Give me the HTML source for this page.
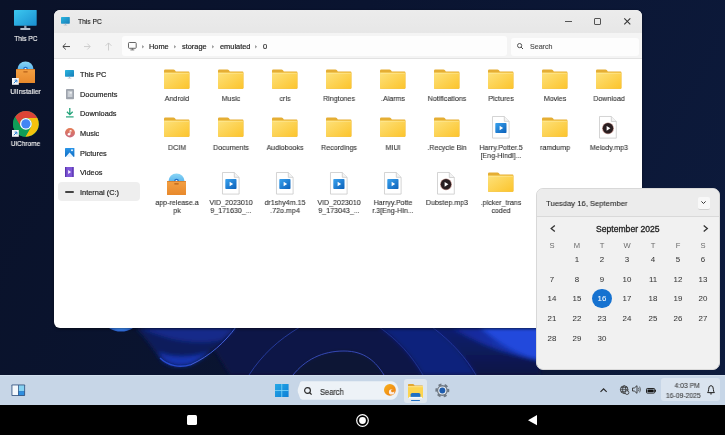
<!DOCTYPE html><html><head><meta charset="utf-8"><style>
*{margin:0;padding:0;box-sizing:border-box}
html,body{width:725px;height:435px;overflow:hidden;background:#0b1430;font-family:"Liberation Sans",sans-serif}
.a{position:absolute}
.t{position:absolute;white-space:nowrap;line-height:10px;height:10px;-webkit-text-stroke-width:0.18px;will-change:transform}
svg{position:absolute;overflow:visible}
</style></head><body>

<svg style="left:0;top:0" width="725" height="375" viewBox="0 0 725 375">
<defs>
<linearGradient id="wg" gradientUnits="userSpaceOnUse" x1="0" y1="0" x2="725" y2="375">
<stop offset="0" stop-color="#0a1229"/><stop offset="0.4" stop-color="#0a1430"/><stop offset="1" stop-color="#0d1b3d"/>
</linearGradient>
<filter id="bl" x="-10%" y="-10%" width="120%" height="120%"><feGaussianBlur stdDeviation="2.2"/></filter>
<filter id="bl1" x="-10%" y="-10%" width="120%" height="120%"><feGaussianBlur stdDeviation="0.6"/></filter>
<radialGradient id="blob" cx="0.5" cy="0.5" r="0.5"><stop offset="0" stop-color="#5aa8ff"/><stop offset="0.8" stop-color="#3a86f0"/><stop offset="1" stop-color="#2a60d0"/></radialGradient>
<linearGradient id="lens" x1="0" y1="0" x2="0" y2="1"><stop offset="0" stop-color="#0e206a"/><stop offset="0.45" stop-color="#0c1a54"/><stop offset="0.8" stop-color="#112680"/><stop offset="1" stop-color="#1a36b0"/></linearGradient>
<linearGradient id="rb" x1="0" y1="0" x2="1" y2="0"><stop offset="0" stop-color="#102288"/><stop offset="1" stop-color="#1a3ac0"/></linearGradient>
<linearGradient id="rb2" x1="0" y1="0" x2="0" y2="1"><stop offset="0" stop-color="#0f2070"/><stop offset="1" stop-color="#0b1545"/></linearGradient>
</defs>
<rect width="725" height="375" fill="url(#wg)"/>
<g filter="url(#bl)">
<path d="M200 327 L540 327 L540 375 L230 375 Z" fill="#0b1646"/>
<path d="M262 327 L379 327 C390 337 395 342 400 345 L400 375 L249 375 C258 355 275 338 300 327 Z" fill="#0b1646"/>
<path d="M293 375 C305 360 322 351 344 351 C365 351 376 362 384 375 Z" fill="#0a1236"/>
<path d="M379 327 L432 327 C452 342 466 358 476 375 L423 375 C412 356 398 340 379 327 Z" fill="#0f207c"/>
<path d="M432 327 L540 327 L540 375 L476 375 C466 358 452 342 432 327 Z" fill="url(#rb2)"/>
<path d="M432 327 L540 327 L540 360 C510 355 480 345 450 327 Z" fill="url(#rb)"/>
<path d="M480 327 C497 342 515 354 540 360 L540 327 Z" fill="#2249dc"/>
<path d="M135 327 L236 327 C220 342 205 358 191 364.6 C183 367.5 170 368 163 363 C155 352 146 338 135 327 Z" fill="#0d1b5c"/><path d="M158 352 C165 364 178 368 191 364.6 C200 360 205 356 210 352 C190 358 172 358 158 352 Z" fill="#1634b0"/>
<path d="M140 327 L236 327 L222 340 C195 346 165 340 140 327 Z" fill="#152d92" opacity="0.85"/>
</g>
<ellipse cx="121" cy="321" rx="16" ry="10.5" fill="url(#blob)" filter="url(#bl1)"/>
<g filter="url(#bl1)">
<path d="M160 358 C168 366 180 368 191 364.6" stroke="#2d55e8" stroke-width="1.4" fill="none" opacity="0.8"/>
<path d="M191 364.6 C210 356 225 342 236 327" stroke="#4a68e8" stroke-width="0.9" fill="none"/>
<path d="M249 375 C262 355 278 340 300 327" stroke="#2c44b0" stroke-width="0.8" fill="none"/>
<path d="M293 375 C305 360 322 351 344 351 C365 351 376 362 384 375" stroke="#3a4ec0" stroke-width="0.9" fill="none"/>
<path d="M379 327 C398 340 412 356 423 375" stroke="#2f48b8" stroke-width="0.7" fill="none" opacity="0.7"/>
<path d="M432 327 C452 342 466 358 476 375" stroke="#3550c8" stroke-width="0.7" fill="none" opacity="0.7"/>
</g>
</svg>
<svg style="left:13.8px;top:9.7px" width="22.7" height="20.1" viewBox="0 0 22.7 20.1"><defs><linearGradient id="mon139" x1="0" y1="0" x2="1" y2="1"><stop offset="0" stop-color="#3cc8f0"/><stop offset="1" stop-color="#1a8fd0"/></linearGradient></defs>
<rect x="0" y="0" width="22.7" height="15.678" rx="0.6" fill="url(#mon139)"/>
<rect x="10.215" y="15.678" width="2.27" height="2.8140000000000005" fill="#9aa6b8"/>
<rect x="6.356000000000001" y="18.090000000000003" width="9.988" height="2.0100000000000002" rx="0.4" fill="#b8c0cc"/></svg>
<div class="t" style="left:0.14999999999999858px;width:51.5px;text-align:center;top:34.4px;font-size:7.8px;color:#f0f0f0;transform:scaleX(0.84);transform-origin:50% 50%;">This PC</div>
<svg style="left:16px;top:60.6px" width="19.0" height="22.0" viewBox="0 0 19 22"><defs><linearGradient id="dsc" x1="0" y1="0" x2="0" y2="1"><stop offset="0" stop-color="#8ad6f6"/><stop offset="1" stop-color="#2e95e2"/></linearGradient>
<linearGradient id="bx" x1="0" y1="0" x2="0" y2="1"><stop offset="0" stop-color="#f3a043"/><stop offset="1" stop-color="#e8892c"/></linearGradient></defs>
<circle cx="9.5" cy="8.6" r="8.1" fill="url(#dsc)"/>
<circle cx="9.5" cy="8.2" r="2.4" fill="#1f6fc8"/>
<circle cx="9.5" cy="8.2" r="1.1" fill="#eef8ff"/>
<rect x="0" y="8.2" width="19" height="13.8" rx="0.6" fill="url(#bx)"/>
<rect x="0" y="8.2" width="19" height="0.8" fill="#d97a22"/>
<rect x="7.2" y="10.2" width="4.6" height="1.2" rx="0.6" fill="#b8621a"/></svg>
<svg style="left:12.2px;top:77.8px" width="6.8" height="6.8" viewBox="0 0 6.8 6.8"><rect x="0" y="0" width="6.8" height="6.8" fill="#f4f6f8"/>
<path d="M1.8 5.2 L4.8 2.2 M2.6 2.1 H4.9 V4.4" stroke="#2a7fd4" stroke-width="1" fill="none"/></svg>
<div class="t" style="left:0.0px;width:51px;text-align:center;top:87.0px;font-size:7.8px;color:#f0f0f0;transform:scaleX(0.88);transform-origin:50% 50%;">UiInstaller</div>
<svg style="left:12.799999999999999px;top:111.19999999999999px" width="25.8" height="25.8" viewBox="0 0 25.8 25.8"><circle cx="12.9" cy="12.9" r="12.9" fill="#0f9d58"/>
<path d="M12.90 6.97 L24.35 6.97 A12.9 12.9 0 0 0 2.03 5.95 L7.76 15.87 A5.93 5.93 0 0 1 12.90 6.97 Z" fill="#db4437" transform="rotate(0 12.9 12.9)"/>
<path d="M12.90 6.97 L24.35 6.97 A12.9 12.9 0 0 0 2.03 5.95 L7.76 15.87 A5.93 5.93 0 0 1 12.90 6.97 Z" fill="#f4c20d" transform="rotate(120 12.9 12.9)"/>
<path d="M12.90 6.97 L24.35 6.97 A12.9 12.9 0 0 0 2.03 5.95 L7.76 15.87 A5.93 5.93 0 0 1 12.90 6.97 Z" fill="#0f9d58" transform="rotate(240 12.9 12.9)"/>
<circle cx="12.9" cy="12.9" r="5.93" fill="#fff"/>
<circle cx="12.9" cy="12.9" r="4.64" fill="#4285f4"/></svg>
<svg style="left:12.2px;top:130.2px" width="6.8" height="6.8" viewBox="0 0 6.8 6.8"><rect x="0" y="0" width="6.8" height="6.8" fill="#f4f6f8"/>
<path d="M1.8 5.2 L4.8 2.2 M2.6 2.1 H4.9 V4.4" stroke="#2a7fd4" stroke-width="1" fill="none"/></svg>
<div class="t" style="left:0.0px;width:51px;text-align:center;top:139.4px;font-size:7.8px;color:#f0f0f0;transform:scaleX(0.84);transform-origin:50% 50%;">UiChrome</div>
<div class="a" style="left:54px;top:10px;width:588px;height:317.5px;border-radius:6px;overflow:hidden;background:#fff;box-shadow:0 1px 3px rgba(0,0,0,0.45)">
<div class="a" style="left:0;top:0;width:588px;height:22.6px;background:linear-gradient(#ececec,#e7e7e7)"></div>
<div class="a" style="left:0;top:22.6px;width:588px;height:26.6px;background:#f4f4f4;border-bottom:0.8px solid #e2e2e2"></div>
<div class="a" style="left:68px;top:26px;width:385px;height:19.5px;background:#fdfdfd;border-radius:3px"></div>
<div class="a" style="left:457px;top:27.5px;width:128px;height:18px;background:#fdfdfd;border-radius:3px"></div>
</div>
<svg style="left:61.1px;top:17.1px" width="8.8" height="8.5" viewBox="0 0 8.8 8.5"><defs><linearGradient id="mon6117" x1="0" y1="0" x2="1" y2="1"><stop offset="0" stop-color="#2ab6e0"/><stop offset="1" stop-color="#167db8"/></linearGradient></defs>
<rect x="0" y="0" width="8.8" height="6.63" rx="0.6" fill="url(#mon6117)"/>
<rect x="3.9600000000000004" y="6.63" width="0.8800000000000001" height="1.1900000000000002" fill="#9aa6b8"/>
<rect x="2.4640000000000004" y="7.65" width="3.8720000000000003" height="0.8500000000000001" rx="0.4" fill="#b8c0cc"/></svg>
<div class="t" style="left:78.2px;top:16.5px;font-size:7.6px;color:#222;transform:scaleX(0.88);transform-origin:0 50%;">This PC</div>
<div class="a" style="left:565px;top:21.3px;width:6.6px;height:0.75px;background:#555"></div>
<div class="a" style="left:594px;top:18px;width:7px;height:7px;border:0.75px solid #555;border-radius:1px"></div>
<svg style="left:624.4px;top:18.4px" width="6.6" height="6.6" viewBox="0 0 6.6 6.6"><path d="M0.3 0.3 L6.3 6.3 M6.3 0.3 L0.3 6.3" stroke="#333" stroke-width="1.05"/></svg>
<svg style="left:61.8px;top:42.8px" width="8.1" height="7.1" viewBox="0 0 8.1 7.1"><path d="M8 3.55 H1 M3.8 0.6 L0.8 3.55 L3.8 6.5" stroke="#444" stroke-width="1" fill="none"/></svg>
<svg style="left:84.2px;top:42.8px" width="7" height="7.1" viewBox="0 0 7 7.1"><path d="M0 3.55 H6 M3.3 0.6 L6.2 3.55 L3.3 6.5" stroke="#c8c8c8" stroke-width="0.9" fill="none"/></svg>
<svg style="left:105px;top:42.3px" width="7" height="8.5" viewBox="0 0 7 8.5"><path d="M3.5 8.5 V1 M0.6 3.8 L3.5 0.9 L6.4 3.8" stroke="#c8c8c8" stroke-width="0.9" fill="none"/></svg>
<svg style="left:127.6px;top:42px" width="8.7" height="8.3" viewBox="0 0 8.7 8.3"><rect x="0.5" y="0.5" width="7.7" height="5.8" rx="0.8" stroke="#555" stroke-width="0.9" fill="none"/><path d="M4.35 6.3 V7.8 M2.4 7.9 H6.3" stroke="#555" stroke-width="0.8"/></svg>
<svg style="left:141.9px;top:45.1px" width="2.2" height="3.6" viewBox="0 0 2.2 3.6"><path d="M0.2 0 L2 1.8 L0.2 3.6 Z" fill="#8a8a8a"/></svg>
<div class="t" style="left:149.4px;top:41.5px;font-size:7.4px;color:#222;transform-origin:0 50%;">Home</div>
<svg style="left:174.1px;top:45.1px" width="2.2" height="3.6" viewBox="0 0 2.2 3.6"><path d="M0.2 0 L2 1.8 L0.2 3.6 Z" fill="#8a8a8a"/></svg>
<div class="t" style="left:182px;top:41.5px;font-size:7.4px;color:#222;transform-origin:0 50%;">storage</div>
<svg style="left:211.6px;top:45.1px" width="2.2" height="3.6" viewBox="0 0 2.2 3.6"><path d="M0.2 0 L2 1.8 L0.2 3.6 Z" fill="#8a8a8a"/></svg>
<div class="t" style="left:219.5px;top:41.5px;font-size:7.4px;color:#222;transform-origin:0 50%;">emulated</div>
<svg style="left:254.9px;top:45.1px" width="2.2" height="3.6" viewBox="0 0 2.2 3.6"><path d="M0.2 0 L2 1.8 L0.2 3.6 Z" fill="#8a8a8a"/></svg>
<div class="t" style="left:262.9px;top:41.5px;font-size:7.4px;color:#222;transform-origin:0 50%;">0</div>
<svg style="left:517px;top:42.8px" width="6.5" height="6.5" viewBox="0 0 6.5 6.5"><circle cx="2.6" cy="2.6" r="2.1" stroke="#444" stroke-width="0.9" fill="none"/><path d="M4.1 4.1 L6 6" stroke="#444" stroke-width="1"/></svg>
<div class="t" style="left:530px;top:41.9px;font-size:7.1px;color:#555;transform-origin:0 50%;">Search</div>
<div class="a" style="left:57.7px;top:182px;width:82.3px;height:19px;background:#eeeeee;border-radius:4px"></div>
<div class="t" style="left:79.5px;top:70.19999999999999px;font-size:7.4px;color:#222;transform-origin:0 50%;">This PC</div>
<div class="t" style="left:79.5px;top:90.0px;font-size:7.4px;color:#222;transform-origin:0 50%;">Documents</div>
<div class="t" style="left:79.5px;top:109.39999999999999px;font-size:7.4px;color:#222;transform-origin:0 50%;">Downloads</div>
<div class="t" style="left:79.5px;top:129.1px;font-size:7.4px;color:#222;transform-origin:0 50%;">Music</div>
<div class="t" style="left:79.5px;top:148.6px;font-size:7.4px;color:#222;transform-origin:0 50%;">Pictures</div>
<div class="t" style="left:79.5px;top:168.0px;font-size:7.4px;color:#222;transform-origin:0 50%;">Videos</div>
<div class="t" style="left:79.5px;top:188.1px;font-size:7.4px;color:#222;transform-origin:0 50%;">Internal (C:)</div>
<svg style="left:65px;top:70.2px" width="9" height="8.5" viewBox="0 0 9 8.5"><defs><linearGradient id="mon6570" x1="0" y1="0" x2="1" y2="1"><stop offset="0" stop-color="#2ab6e0"/><stop offset="1" stop-color="#167db8"/></linearGradient></defs>
<rect x="0" y="0" width="9" height="6.63" rx="0.6" fill="url(#mon6570)"/>
<rect x="4.05" y="6.63" width="0.9" height="1.1900000000000002" fill="#9aa6b8"/>
<rect x="2.5200000000000005" y="7.65" width="3.96" height="0.8500000000000001" rx="0.4" fill="#b8c0cc"/></svg>
<svg style="left:65.7px;top:88.8px" width="8" height="10.2" viewBox="0 0 8 10.2"><rect x="0" y="0" width="8" height="10.2" rx="0.8" fill="#9ea4ad"/><rect x="1.6" y="1.8" width="4.8" height="6.2" fill="#c9ced4"/><rect x="3.6" y="3" width="2.2" height="1.6" fill="#eef0f2"/></svg>
<svg style="left:65.7px;top:108px" width="7.6" height="9.5" viewBox="0 0 7.6 9.5"><path d="M3.8 0 V6.5 M0.9 3.8 L3.8 6.7 L6.7 3.8" stroke="#23a37a" stroke-width="1.3" fill="none"/><rect x="0" y="8.3" width="7.6" height="1.2" fill="#23a37a"/></svg>
<svg style="left:64.6px;top:128.3px" width="10" height="9.5" viewBox="0 0 10 9.5"><defs><linearGradient id="mus" x1="0" y1="0" x2="0" y2="1"><stop offset="0" stop-color="#e57d55"/><stop offset="1" stop-color="#c9687e"/></linearGradient></defs><ellipse cx="5" cy="4.75" rx="5" ry="4.75" fill="url(#mus)"/><circle cx="4" cy="6.2" r="1.3" fill="#fff"/><path d="M5.1 6.2 V2.3 L6.9 3.1" stroke="#fff" stroke-width="0.9" fill="none"/></svg>
<svg style="left:64.8px;top:148.3px" width="9.4" height="8.9" viewBox="0 0 9.4 8.9"><defs><linearGradient id="pic" x1="0" y1="0" x2="0" y2="1"><stop offset="0" stop-color="#2a95e8"/><stop offset="1" stop-color="#0f6ec4"/></linearGradient></defs><rect x="0" y="0" width="9.4" height="8.9" rx="0.6" fill="url(#pic)"/><path d="M0.6 8.9 L4.6 4.6 L8.8 8.9 Z" fill="#eaf5ff"/><circle cx="7" cy="2.3" r="1" fill="#eaf5ff"/></svg>
<svg style="left:65.2px;top:167px" width="8.6" height="10" viewBox="0 0 8.6 10"><rect x="0" y="0" width="8.6" height="10" rx="0.5" fill="#7d55d6"/><rect x="0" y="0" width="1.3" height="10" fill="#5a36ae"/><rect x="7.3" y="0" width="1.3" height="10" fill="#5a36ae"/><path d="M3.1 3 L6.1 5 L3.1 7 Z" fill="#f4eeff"/></svg>
<div class="a" style="left:65px;top:190.8px;width:9.3px;height:2.6px;background:#444;border-radius:1px"></div>
<svg style="left:164.20000000000002px;top:68.9px" width="25.4" height="19.7" viewBox="0 0 25.4 19.7"><defs><linearGradient id="fd164_68" x1="0" y1="0" x2="1" y2="1"><stop offset="0" stop-color="#fde17a"/><stop offset="1" stop-color="#fcc42c"/></linearGradient></defs>
<path d="M1.2 0.5 H9.4 Q10.4 0.5 11 1.3 L11.8 2.4 H24.6 Q25.4 2.4 25.4 3.2 V18.9 Q25.4 19.7 24.6 19.7 H0.8 Q0 19.7 0 18.9 V1.7 Q0 0.5 1.2 0.5 Z" fill="#e5ae34"/>
<path d="M0 3.5 H24.6 Q25.4 3.5 25.4 4.3 V18.9 Q25.4 19.7 24.6 19.7 H0.8 Q0 19.7 0 18.9 Z" fill="url(#fd164_68)"/>
<rect x="0.6" y="4.4" width="24.2" height="0.5" fill="#fff2b8" opacity="0.7"/></svg>
<div class="a" style="left:146.8px;top:95.3px;width:60px;text-align:center;font-size:7.8px;line-height:8.3px;color:#333;-webkit-text-stroke:0.12px #333;white-space:nowrap;transform:scaleX(0.91);transform-origin:50% 0;will-change:transform">Android</div>
<svg style="left:218.20000000000002px;top:68.9px" width="25.4" height="19.7" viewBox="0 0 25.4 19.7"><defs><linearGradient id="fd218_68" x1="0" y1="0" x2="1" y2="1"><stop offset="0" stop-color="#fde17a"/><stop offset="1" stop-color="#fcc42c"/></linearGradient></defs>
<path d="M1.2 0.5 H9.4 Q10.4 0.5 11 1.3 L11.8 2.4 H24.6 Q25.4 2.4 25.4 3.2 V18.9 Q25.4 19.7 24.6 19.7 H0.8 Q0 19.7 0 18.9 V1.7 Q0 0.5 1.2 0.5 Z" fill="#e5ae34"/>
<path d="M0 3.5 H24.6 Q25.4 3.5 25.4 4.3 V18.9 Q25.4 19.7 24.6 19.7 H0.8 Q0 19.7 0 18.9 Z" fill="url(#fd218_68)"/>
<rect x="0.6" y="4.4" width="24.2" height="0.5" fill="#fff2b8" opacity="0.7"/></svg>
<div class="a" style="left:200.8px;top:95.3px;width:60px;text-align:center;font-size:7.8px;line-height:8.3px;color:#333;-webkit-text-stroke:0.12px #333;white-space:nowrap;transform:scaleX(0.91);transform-origin:50% 0;will-change:transform">Music</div>
<svg style="left:272.2px;top:68.9px" width="25.4" height="19.7" viewBox="0 0 25.4 19.7"><defs><linearGradient id="fd272_68" x1="0" y1="0" x2="1" y2="1"><stop offset="0" stop-color="#fde17a"/><stop offset="1" stop-color="#fcc42c"/></linearGradient></defs>
<path d="M1.2 0.5 H9.4 Q10.4 0.5 11 1.3 L11.8 2.4 H24.6 Q25.4 2.4 25.4 3.2 V18.9 Q25.4 19.7 24.6 19.7 H0.8 Q0 19.7 0 18.9 V1.7 Q0 0.5 1.2 0.5 Z" fill="#e5ae34"/>
<path d="M0 3.5 H24.6 Q25.4 3.5 25.4 4.3 V18.9 Q25.4 19.7 24.6 19.7 H0.8 Q0 19.7 0 18.9 Z" fill="url(#fd272_68)"/>
<rect x="0.6" y="4.4" width="24.2" height="0.5" fill="#fff2b8" opacity="0.7"/></svg>
<div class="a" style="left:254.8px;top:95.3px;width:60px;text-align:center;font-size:7.8px;line-height:8.3px;color:#333;-webkit-text-stroke:0.12px #333;white-space:nowrap;transform:scaleX(0.91);transform-origin:50% 0;will-change:transform">crls</div>
<svg style="left:326.2px;top:68.9px" width="25.4" height="19.7" viewBox="0 0 25.4 19.7"><defs><linearGradient id="fd326_68" x1="0" y1="0" x2="1" y2="1"><stop offset="0" stop-color="#fde17a"/><stop offset="1" stop-color="#fcc42c"/></linearGradient></defs>
<path d="M1.2 0.5 H9.4 Q10.4 0.5 11 1.3 L11.8 2.4 H24.6 Q25.4 2.4 25.4 3.2 V18.9 Q25.4 19.7 24.6 19.7 H0.8 Q0 19.7 0 18.9 V1.7 Q0 0.5 1.2 0.5 Z" fill="#e5ae34"/>
<path d="M0 3.5 H24.6 Q25.4 3.5 25.4 4.3 V18.9 Q25.4 19.7 24.6 19.7 H0.8 Q0 19.7 0 18.9 Z" fill="url(#fd326_68)"/>
<rect x="0.6" y="4.4" width="24.2" height="0.5" fill="#fff2b8" opacity="0.7"/></svg>
<div class="a" style="left:308.8px;top:95.3px;width:60px;text-align:center;font-size:7.8px;line-height:8.3px;color:#333;-webkit-text-stroke:0.12px #333;white-space:nowrap;transform:scaleX(0.91);transform-origin:50% 0;will-change:transform">Ringtones</div>
<svg style="left:380.2px;top:68.9px" width="25.4" height="19.7" viewBox="0 0 25.4 19.7"><defs><linearGradient id="fd380_68" x1="0" y1="0" x2="1" y2="1"><stop offset="0" stop-color="#fde17a"/><stop offset="1" stop-color="#fcc42c"/></linearGradient></defs>
<path d="M1.2 0.5 H9.4 Q10.4 0.5 11 1.3 L11.8 2.4 H24.6 Q25.4 2.4 25.4 3.2 V18.9 Q25.4 19.7 24.6 19.7 H0.8 Q0 19.7 0 18.9 V1.7 Q0 0.5 1.2 0.5 Z" fill="#e5ae34"/>
<path d="M0 3.5 H24.6 Q25.4 3.5 25.4 4.3 V18.9 Q25.4 19.7 24.6 19.7 H0.8 Q0 19.7 0 18.9 Z" fill="url(#fd380_68)"/>
<rect x="0.6" y="4.4" width="24.2" height="0.5" fill="#fff2b8" opacity="0.7"/></svg>
<div class="a" style="left:362.8px;top:95.3px;width:60px;text-align:center;font-size:7.8px;line-height:8.3px;color:#333;-webkit-text-stroke:0.12px #333;white-space:nowrap;transform:scaleX(0.91);transform-origin:50% 0;will-change:transform">.Alarms</div>
<svg style="left:434.2px;top:68.9px" width="25.4" height="19.7" viewBox="0 0 25.4 19.7"><defs><linearGradient id="fd434_68" x1="0" y1="0" x2="1" y2="1"><stop offset="0" stop-color="#fde17a"/><stop offset="1" stop-color="#fcc42c"/></linearGradient></defs>
<path d="M1.2 0.5 H9.4 Q10.4 0.5 11 1.3 L11.8 2.4 H24.6 Q25.4 2.4 25.4 3.2 V18.9 Q25.4 19.7 24.6 19.7 H0.8 Q0 19.7 0 18.9 V1.7 Q0 0.5 1.2 0.5 Z" fill="#e5ae34"/>
<path d="M0 3.5 H24.6 Q25.4 3.5 25.4 4.3 V18.9 Q25.4 19.7 24.6 19.7 H0.8 Q0 19.7 0 18.9 Z" fill="url(#fd434_68)"/>
<rect x="0.6" y="4.4" width="24.2" height="0.5" fill="#fff2b8" opacity="0.7"/></svg>
<div class="a" style="left:416.8px;top:95.3px;width:60px;text-align:center;font-size:7.8px;line-height:8.3px;color:#333;-webkit-text-stroke:0.12px #333;white-space:nowrap;transform:scaleX(0.91);transform-origin:50% 0;will-change:transform">Notifications</div>
<svg style="left:488.2px;top:68.9px" width="25.4" height="19.7" viewBox="0 0 25.4 19.7"><defs><linearGradient id="fd488_68" x1="0" y1="0" x2="1" y2="1"><stop offset="0" stop-color="#fde17a"/><stop offset="1" stop-color="#fcc42c"/></linearGradient></defs>
<path d="M1.2 0.5 H9.4 Q10.4 0.5 11 1.3 L11.8 2.4 H24.6 Q25.4 2.4 25.4 3.2 V18.9 Q25.4 19.7 24.6 19.7 H0.8 Q0 19.7 0 18.9 V1.7 Q0 0.5 1.2 0.5 Z" fill="#e5ae34"/>
<path d="M0 3.5 H24.6 Q25.4 3.5 25.4 4.3 V18.9 Q25.4 19.7 24.6 19.7 H0.8 Q0 19.7 0 18.9 Z" fill="url(#fd488_68)"/>
<rect x="0.6" y="4.4" width="24.2" height="0.5" fill="#fff2b8" opacity="0.7"/></svg>
<div class="a" style="left:470.8px;top:95.3px;width:60px;text-align:center;font-size:7.8px;line-height:8.3px;color:#333;-webkit-text-stroke:0.12px #333;white-space:nowrap;transform:scaleX(0.91);transform-origin:50% 0;will-change:transform">Pictures</div>
<svg style="left:542.1999999999999px;top:68.9px" width="25.4" height="19.7" viewBox="0 0 25.4 19.7"><defs><linearGradient id="fd542_68" x1="0" y1="0" x2="1" y2="1"><stop offset="0" stop-color="#fde17a"/><stop offset="1" stop-color="#fcc42c"/></linearGradient></defs>
<path d="M1.2 0.5 H9.4 Q10.4 0.5 11 1.3 L11.8 2.4 H24.6 Q25.4 2.4 25.4 3.2 V18.9 Q25.4 19.7 24.6 19.7 H0.8 Q0 19.7 0 18.9 V1.7 Q0 0.5 1.2 0.5 Z" fill="#e5ae34"/>
<path d="M0 3.5 H24.6 Q25.4 3.5 25.4 4.3 V18.9 Q25.4 19.7 24.6 19.7 H0.8 Q0 19.7 0 18.9 Z" fill="url(#fd542_68)"/>
<rect x="0.6" y="4.4" width="24.2" height="0.5" fill="#fff2b8" opacity="0.7"/></svg>
<div class="a" style="left:524.8px;top:95.3px;width:60px;text-align:center;font-size:7.8px;line-height:8.3px;color:#333;-webkit-text-stroke:0.12px #333;white-space:nowrap;transform:scaleX(0.91);transform-origin:50% 0;will-change:transform">Movies</div>
<svg style="left:596.1999999999999px;top:68.9px" width="25.4" height="19.7" viewBox="0 0 25.4 19.7"><defs><linearGradient id="fd596_68" x1="0" y1="0" x2="1" y2="1"><stop offset="0" stop-color="#fde17a"/><stop offset="1" stop-color="#fcc42c"/></linearGradient></defs>
<path d="M1.2 0.5 H9.4 Q10.4 0.5 11 1.3 L11.8 2.4 H24.6 Q25.4 2.4 25.4 3.2 V18.9 Q25.4 19.7 24.6 19.7 H0.8 Q0 19.7 0 18.9 V1.7 Q0 0.5 1.2 0.5 Z" fill="#e5ae34"/>
<path d="M0 3.5 H24.6 Q25.4 3.5 25.4 4.3 V18.9 Q25.4 19.7 24.6 19.7 H0.8 Q0 19.7 0 18.9 Z" fill="url(#fd596_68)"/>
<rect x="0.6" y="4.4" width="24.2" height="0.5" fill="#fff2b8" opacity="0.7"/></svg>
<div class="a" style="left:578.8px;top:95.3px;width:60px;text-align:center;font-size:7.8px;line-height:8.3px;color:#333;-webkit-text-stroke:0.12px #333;white-space:nowrap;transform:scaleX(0.91);transform-origin:50% 0;will-change:transform">Download</div>
<svg style="left:164.20000000000002px;top:116.8px" width="25.4" height="19.7" viewBox="0 0 25.4 19.7"><defs><linearGradient id="fd164_116" x1="0" y1="0" x2="1" y2="1"><stop offset="0" stop-color="#fde17a"/><stop offset="1" stop-color="#fcc42c"/></linearGradient></defs>
<path d="M1.2 0.5 H9.4 Q10.4 0.5 11 1.3 L11.8 2.4 H24.6 Q25.4 2.4 25.4 3.2 V18.9 Q25.4 19.7 24.6 19.7 H0.8 Q0 19.7 0 18.9 V1.7 Q0 0.5 1.2 0.5 Z" fill="#e5ae34"/>
<path d="M0 3.5 H24.6 Q25.4 3.5 25.4 4.3 V18.9 Q25.4 19.7 24.6 19.7 H0.8 Q0 19.7 0 18.9 Z" fill="url(#fd164_116)"/>
<rect x="0.6" y="4.4" width="24.2" height="0.5" fill="#fff2b8" opacity="0.7"/></svg>
<div class="a" style="left:146.8px;top:143.5px;width:60px;text-align:center;font-size:7.8px;line-height:8.3px;color:#333;-webkit-text-stroke:0.12px #333;white-space:nowrap;transform:scaleX(0.91);transform-origin:50% 0;will-change:transform">DCIM</div>
<svg style="left:218.20000000000002px;top:116.8px" width="25.4" height="19.7" viewBox="0 0 25.4 19.7"><defs><linearGradient id="fd218_116" x1="0" y1="0" x2="1" y2="1"><stop offset="0" stop-color="#fde17a"/><stop offset="1" stop-color="#fcc42c"/></linearGradient></defs>
<path d="M1.2 0.5 H9.4 Q10.4 0.5 11 1.3 L11.8 2.4 H24.6 Q25.4 2.4 25.4 3.2 V18.9 Q25.4 19.7 24.6 19.7 H0.8 Q0 19.7 0 18.9 V1.7 Q0 0.5 1.2 0.5 Z" fill="#e5ae34"/>
<path d="M0 3.5 H24.6 Q25.4 3.5 25.4 4.3 V18.9 Q25.4 19.7 24.6 19.7 H0.8 Q0 19.7 0 18.9 Z" fill="url(#fd218_116)"/>
<rect x="0.6" y="4.4" width="24.2" height="0.5" fill="#fff2b8" opacity="0.7"/></svg>
<div class="a" style="left:200.8px;top:143.5px;width:60px;text-align:center;font-size:7.8px;line-height:8.3px;color:#333;-webkit-text-stroke:0.12px #333;white-space:nowrap;transform:scaleX(0.91);transform-origin:50% 0;will-change:transform">Documents</div>
<svg style="left:272.2px;top:116.8px" width="25.4" height="19.7" viewBox="0 0 25.4 19.7"><defs><linearGradient id="fd272_116" x1="0" y1="0" x2="1" y2="1"><stop offset="0" stop-color="#fde17a"/><stop offset="1" stop-color="#fcc42c"/></linearGradient></defs>
<path d="M1.2 0.5 H9.4 Q10.4 0.5 11 1.3 L11.8 2.4 H24.6 Q25.4 2.4 25.4 3.2 V18.9 Q25.4 19.7 24.6 19.7 H0.8 Q0 19.7 0 18.9 V1.7 Q0 0.5 1.2 0.5 Z" fill="#e5ae34"/>
<path d="M0 3.5 H24.6 Q25.4 3.5 25.4 4.3 V18.9 Q25.4 19.7 24.6 19.7 H0.8 Q0 19.7 0 18.9 Z" fill="url(#fd272_116)"/>
<rect x="0.6" y="4.4" width="24.2" height="0.5" fill="#fff2b8" opacity="0.7"/></svg>
<div class="a" style="left:254.8px;top:143.5px;width:60px;text-align:center;font-size:7.8px;line-height:8.3px;color:#333;-webkit-text-stroke:0.12px #333;white-space:nowrap;transform:scaleX(0.91);transform-origin:50% 0;will-change:transform">Audiobooks</div>
<svg style="left:326.2px;top:116.8px" width="25.4" height="19.7" viewBox="0 0 25.4 19.7"><defs><linearGradient id="fd326_116" x1="0" y1="0" x2="1" y2="1"><stop offset="0" stop-color="#fde17a"/><stop offset="1" stop-color="#fcc42c"/></linearGradient></defs>
<path d="M1.2 0.5 H9.4 Q10.4 0.5 11 1.3 L11.8 2.4 H24.6 Q25.4 2.4 25.4 3.2 V18.9 Q25.4 19.7 24.6 19.7 H0.8 Q0 19.7 0 18.9 V1.7 Q0 0.5 1.2 0.5 Z" fill="#e5ae34"/>
<path d="M0 3.5 H24.6 Q25.4 3.5 25.4 4.3 V18.9 Q25.4 19.7 24.6 19.7 H0.8 Q0 19.7 0 18.9 Z" fill="url(#fd326_116)"/>
<rect x="0.6" y="4.4" width="24.2" height="0.5" fill="#fff2b8" opacity="0.7"/></svg>
<div class="a" style="left:308.8px;top:143.5px;width:60px;text-align:center;font-size:7.8px;line-height:8.3px;color:#333;-webkit-text-stroke:0.12px #333;white-space:nowrap;transform:scaleX(0.91);transform-origin:50% 0;will-change:transform">Recordings</div>
<svg style="left:380.2px;top:116.8px" width="25.4" height="19.7" viewBox="0 0 25.4 19.7"><defs><linearGradient id="fd380_116" x1="0" y1="0" x2="1" y2="1"><stop offset="0" stop-color="#fde17a"/><stop offset="1" stop-color="#fcc42c"/></linearGradient></defs>
<path d="M1.2 0.5 H9.4 Q10.4 0.5 11 1.3 L11.8 2.4 H24.6 Q25.4 2.4 25.4 3.2 V18.9 Q25.4 19.7 24.6 19.7 H0.8 Q0 19.7 0 18.9 V1.7 Q0 0.5 1.2 0.5 Z" fill="#e5ae34"/>
<path d="M0 3.5 H24.6 Q25.4 3.5 25.4 4.3 V18.9 Q25.4 19.7 24.6 19.7 H0.8 Q0 19.7 0 18.9 Z" fill="url(#fd380_116)"/>
<rect x="0.6" y="4.4" width="24.2" height="0.5" fill="#fff2b8" opacity="0.7"/></svg>
<div class="a" style="left:362.8px;top:143.5px;width:60px;text-align:center;font-size:7.8px;line-height:8.3px;color:#333;-webkit-text-stroke:0.12px #333;white-space:nowrap;transform:scaleX(0.91);transform-origin:50% 0;will-change:transform">MIUI</div>
<svg style="left:434.2px;top:116.8px" width="25.4" height="19.7" viewBox="0 0 25.4 19.7"><defs><linearGradient id="fd434_116" x1="0" y1="0" x2="1" y2="1"><stop offset="0" stop-color="#fde17a"/><stop offset="1" stop-color="#fcc42c"/></linearGradient></defs>
<path d="M1.2 0.5 H9.4 Q10.4 0.5 11 1.3 L11.8 2.4 H24.6 Q25.4 2.4 25.4 3.2 V18.9 Q25.4 19.7 24.6 19.7 H0.8 Q0 19.7 0 18.9 V1.7 Q0 0.5 1.2 0.5 Z" fill="#e5ae34"/>
<path d="M0 3.5 H24.6 Q25.4 3.5 25.4 4.3 V18.9 Q25.4 19.7 24.6 19.7 H0.8 Q0 19.7 0 18.9 Z" fill="url(#fd434_116)"/>
<rect x="0.6" y="4.4" width="24.2" height="0.5" fill="#fff2b8" opacity="0.7"/></svg>
<div class="a" style="left:416.8px;top:143.5px;width:60px;text-align:center;font-size:7.8px;line-height:8.3px;color:#333;-webkit-text-stroke:0.12px #333;white-space:nowrap;transform:scaleX(0.91);transform-origin:50% 0;will-change:transform">.Recycle Bin</div>
<svg style="left:492.0px;top:116px" width="17.6" height="22.6" viewBox="0 0 17.6 22.6"><defs><linearGradient id="vd492_116" x1="0" y1="0" x2="1" y2="1"><stop offset="0" stop-color="#3aa3ef"/><stop offset="1" stop-color="#0b5fb8"/></linearGradient></defs>
<path d="M0.5 0.5 H12.3 L17.1 5.3 V22.1 H0.5 Z" fill="#fff" stroke="#c9c9c9" stroke-width="0.8"/>
<path d="M12.3 0.5 V5.3 H17.1" fill="#f3f3f3" stroke="#c9c9c9" stroke-width="0.8"/>
<rect x="3.3" y="6.9" width="11.2" height="10.1" rx="0.8" fill="url(#vd492_116)"/>
<path d="M7.6 9.8 L11.2 12 L7.6 14.2 Z" fill="#fff"/></svg>
<div class="a" style="left:470.8px;top:143.5px;width:60px;text-align:center;font-size:7.8px;line-height:8.3px;color:#333;-webkit-text-stroke:0.12px #333;white-space:nowrap;transform:scaleX(0.91);transform-origin:50% 0;will-change:transform">Harry.Potter.5<br>[Eng-Hindi]...</div>
<svg style="left:542.1999999999999px;top:116.8px" width="25.4" height="19.7" viewBox="0 0 25.4 19.7"><defs><linearGradient id="fd542_116" x1="0" y1="0" x2="1" y2="1"><stop offset="0" stop-color="#fde17a"/><stop offset="1" stop-color="#fcc42c"/></linearGradient></defs>
<path d="M1.2 0.5 H9.4 Q10.4 0.5 11 1.3 L11.8 2.4 H24.6 Q25.4 2.4 25.4 3.2 V18.9 Q25.4 19.7 24.6 19.7 H0.8 Q0 19.7 0 18.9 V1.7 Q0 0.5 1.2 0.5 Z" fill="#e5ae34"/>
<path d="M0 3.5 H24.6 Q25.4 3.5 25.4 4.3 V18.9 Q25.4 19.7 24.6 19.7 H0.8 Q0 19.7 0 18.9 Z" fill="url(#fd542_116)"/>
<rect x="0.6" y="4.4" width="24.2" height="0.5" fill="#fff2b8" opacity="0.7"/></svg>
<div class="a" style="left:524.8px;top:143.5px;width:60px;text-align:center;font-size:7.8px;line-height:8.3px;color:#333;-webkit-text-stroke:0.12px #333;white-space:nowrap;transform:scaleX(0.91);transform-origin:50% 0;will-change:transform">ramdump</div>
<svg style="left:599.0px;top:116px" width="17.8" height="22.6" viewBox="0 0 17.8 22.6"><path d="M0.5 0.5 H12.3 L17.3 5.5 V22.1 H0.5 Z" fill="#fff" stroke="#c9c9c9" stroke-width="0.8"/>
<path d="M12.3 0.5 V5.5 H17.3" fill="#f3f3f3" stroke="#c9c9c9" stroke-width="0.8"/>
<circle cx="9" cy="12.3" r="5.9" fill="#8a3a30" opacity="0.55"/>
<circle cx="9" cy="12.3" r="5.2" fill="#2a1e20"/>
<path d="M7.6 9.9 L11.4 12.3 L7.6 14.7 Z" fill="#fff"/></svg>
<div class="a" style="left:578.8px;top:143.5px;width:60px;text-align:center;font-size:7.8px;line-height:8.3px;color:#333;-webkit-text-stroke:0.12px #333;white-space:nowrap;transform:scaleX(0.91);transform-origin:50% 0;will-change:transform">Melody.mp3</div>
<svg style="left:167.0px;top:172.6px" width="19.0" height="22.0" viewBox="0 0 19 22"><defs><linearGradient id="dsc" x1="0" y1="0" x2="0" y2="1"><stop offset="0" stop-color="#8ad6f6"/><stop offset="1" stop-color="#2e95e2"/></linearGradient>
<linearGradient id="bx" x1="0" y1="0" x2="0" y2="1"><stop offset="0" stop-color="#f3a043"/><stop offset="1" stop-color="#e8892c"/></linearGradient></defs>
<circle cx="9.5" cy="8.6" r="8.1" fill="url(#dsc)"/>
<circle cx="9.5" cy="8.2" r="2.4" fill="#1f6fc8"/>
<circle cx="9.5" cy="8.2" r="1.1" fill="#eef8ff"/>
<rect x="0" y="8.2" width="19" height="13.8" rx="0.6" fill="url(#bx)"/>
<rect x="0" y="8.2" width="19" height="0.8" fill="#d97a22"/>
<rect x="7.2" y="10.2" width="4.6" height="1.2" rx="0.6" fill="#b8621a"/></svg>
<div class="a" style="left:146.8px;top:199.3px;width:60px;text-align:center;font-size:7.8px;line-height:8.3px;color:#333;-webkit-text-stroke:0.12px #333;white-space:nowrap;transform:scaleX(0.91);transform-origin:50% 0;will-change:transform">app-release.a<br>pk</div>
<svg style="left:222.0px;top:172px" width="17.6" height="22.6" viewBox="0 0 17.6 22.6"><defs><linearGradient id="vd222_172" x1="0" y1="0" x2="1" y2="1"><stop offset="0" stop-color="#3aa3ef"/><stop offset="1" stop-color="#0b5fb8"/></linearGradient></defs>
<path d="M0.5 0.5 H12.3 L17.1 5.3 V22.1 H0.5 Z" fill="#fff" stroke="#c9c9c9" stroke-width="0.8"/>
<path d="M12.3 0.5 V5.3 H17.1" fill="#f3f3f3" stroke="#c9c9c9" stroke-width="0.8"/>
<rect x="3.3" y="6.9" width="11.2" height="10.1" rx="0.8" fill="url(#vd222_172)"/>
<path d="M7.6 9.8 L11.2 12 L7.6 14.2 Z" fill="#fff"/></svg>
<div class="a" style="left:200.8px;top:199.3px;width:60px;text-align:center;font-size:7.8px;line-height:8.3px;color:#333;-webkit-text-stroke:0.12px #333;white-space:nowrap;transform:scaleX(0.91);transform-origin:50% 0;will-change:transform">VID_2023010<br>9_171630_...</div>
<svg style="left:276.0px;top:172px" width="17.6" height="22.6" viewBox="0 0 17.6 22.6"><defs><linearGradient id="vd276_172" x1="0" y1="0" x2="1" y2="1"><stop offset="0" stop-color="#3aa3ef"/><stop offset="1" stop-color="#0b5fb8"/></linearGradient></defs>
<path d="M0.5 0.5 H12.3 L17.1 5.3 V22.1 H0.5 Z" fill="#fff" stroke="#c9c9c9" stroke-width="0.8"/>
<path d="M12.3 0.5 V5.3 H17.1" fill="#f3f3f3" stroke="#c9c9c9" stroke-width="0.8"/>
<rect x="3.3" y="6.9" width="11.2" height="10.1" rx="0.8" fill="url(#vd276_172)"/>
<path d="M7.6 9.8 L11.2 12 L7.6 14.2 Z" fill="#fff"/></svg>
<div class="a" style="left:254.8px;top:199.3px;width:60px;text-align:center;font-size:7.8px;line-height:8.3px;color:#333;-webkit-text-stroke:0.12px #333;white-space:nowrap;transform:scaleX(0.91);transform-origin:50% 0;will-change:transform">dr1shy4m.15<br>.72o.mp4</div>
<svg style="left:330.0px;top:172px" width="17.6" height="22.6" viewBox="0 0 17.6 22.6"><defs><linearGradient id="vd330_172" x1="0" y1="0" x2="1" y2="1"><stop offset="0" stop-color="#3aa3ef"/><stop offset="1" stop-color="#0b5fb8"/></linearGradient></defs>
<path d="M0.5 0.5 H12.3 L17.1 5.3 V22.1 H0.5 Z" fill="#fff" stroke="#c9c9c9" stroke-width="0.8"/>
<path d="M12.3 0.5 V5.3 H17.1" fill="#f3f3f3" stroke="#c9c9c9" stroke-width="0.8"/>
<rect x="3.3" y="6.9" width="11.2" height="10.1" rx="0.8" fill="url(#vd330_172)"/>
<path d="M7.6 9.8 L11.2 12 L7.6 14.2 Z" fill="#fff"/></svg>
<div class="a" style="left:308.8px;top:199.3px;width:60px;text-align:center;font-size:7.8px;line-height:8.3px;color:#333;-webkit-text-stroke:0.12px #333;white-space:nowrap;transform:scaleX(0.91);transform-origin:50% 0;will-change:transform">VID_2023010<br>9_173043_...</div>
<svg style="left:384.0px;top:172px" width="17.6" height="22.6" viewBox="0 0 17.6 22.6"><defs><linearGradient id="vd384_172" x1="0" y1="0" x2="1" y2="1"><stop offset="0" stop-color="#3aa3ef"/><stop offset="1" stop-color="#0b5fb8"/></linearGradient></defs>
<path d="M0.5 0.5 H12.3 L17.1 5.3 V22.1 H0.5 Z" fill="#fff" stroke="#c9c9c9" stroke-width="0.8"/>
<path d="M12.3 0.5 V5.3 H17.1" fill="#f3f3f3" stroke="#c9c9c9" stroke-width="0.8"/>
<rect x="3.3" y="6.9" width="11.2" height="10.1" rx="0.8" fill="url(#vd384_172)"/>
<path d="M7.6 9.8 L11.2 12 L7.6 14.2 Z" fill="#fff"/></svg>
<div class="a" style="left:362.8px;top:199.3px;width:60px;text-align:center;font-size:7.8px;line-height:8.3px;color:#333;-webkit-text-stroke:0.12px #333;white-space:nowrap;transform:scaleX(0.91);transform-origin:50% 0;will-change:transform">Harryy.Potte<br>r.3[Eng-Hin...</div>
<svg style="left:437.0px;top:172px" width="17.8" height="22.6" viewBox="0 0 17.8 22.6"><path d="M0.5 0.5 H12.3 L17.3 5.5 V22.1 H0.5 Z" fill="#fff" stroke="#c9c9c9" stroke-width="0.8"/>
<path d="M12.3 0.5 V5.5 H17.3" fill="#f3f3f3" stroke="#c9c9c9" stroke-width="0.8"/>
<circle cx="9" cy="12.3" r="5.9" fill="#8a3a30" opacity="0.55"/>
<circle cx="9" cy="12.3" r="5.2" fill="#2a1e20"/>
<path d="M7.6 9.9 L11.4 12.3 L7.6 14.7 Z" fill="#fff"/></svg>
<div class="a" style="left:416.8px;top:199.3px;width:60px;text-align:center;font-size:7.8px;line-height:8.3px;color:#333;-webkit-text-stroke:0.12px #333;white-space:nowrap;transform:scaleX(0.91);transform-origin:50% 0;will-change:transform">Dubstep.mp3</div>
<svg style="left:488.2px;top:172.4px" width="25.4" height="19.7" viewBox="0 0 25.4 19.7"><defs><linearGradient id="fd488_172" x1="0" y1="0" x2="1" y2="1"><stop offset="0" stop-color="#fde17a"/><stop offset="1" stop-color="#fcc42c"/></linearGradient></defs>
<path d="M1.2 0.5 H9.4 Q10.4 0.5 11 1.3 L11.8 2.4 H24.6 Q25.4 2.4 25.4 3.2 V18.9 Q25.4 19.7 24.6 19.7 H0.8 Q0 19.7 0 18.9 V1.7 Q0 0.5 1.2 0.5 Z" fill="#e5ae34"/>
<path d="M0 3.5 H24.6 Q25.4 3.5 25.4 4.3 V18.9 Q25.4 19.7 24.6 19.7 H0.8 Q0 19.7 0 18.9 Z" fill="url(#fd488_172)"/>
<rect x="0.6" y="4.4" width="24.2" height="0.5" fill="#fff2b8" opacity="0.7"/></svg>
<div class="a" style="left:470.8px;top:199.3px;width:60px;text-align:center;font-size:7.8px;line-height:8.3px;color:#333;-webkit-text-stroke:0.12px #333;white-space:nowrap;transform:scaleX(0.91);transform-origin:50% 0;will-change:transform">.picker_trans<br>coded</div>
<div class="a" style="left:536.2px;top:188.3px;width:184px;height:181.7px;border-radius:7px;background:#f1f1f1;border:0.8px solid #d8d8d8;overflow:hidden">
<div class="a" style="left:0;top:0;width:184px;height:28.2px;background:#ececec;border-bottom:0.8px solid #d9d9d9"></div>
</div>
<div class="t" style="left:545.5px;top:198.6px;font-size:7.9px;color:#222;transform:scaleX(0.97);transform-origin:0 50%;-webkit-text-stroke-width:0.08px">Tuesday 16, September</div>
<div class="a" style="left:698px;top:196.6px;width:11.7px;height:13px;background:#f8f8f8;border-radius:2px;border-bottom:0.8px solid #d0d0d0"></div>
<svg style="left:701.3px;top:201.4px" width="5" height="3" viewBox="0 0 5 3"><path d="M0.4 0.4 L2.5 2.5 L4.6 0.4" stroke="#333" stroke-width="1" fill="none"/></svg>
<svg style="left:549.5px;top:224.8px" width="5.5" height="7" viewBox="0 0 5.5 7"><path d="M4.8 0.6 L1.2 3.5 L4.8 6.4" stroke="#333" stroke-width="1.3" fill="none"/></svg>
<svg style="left:702.5px;top:224.8px" width="5.5" height="7" viewBox="0 0 5.5 7"><path d="M0.7 0.6 L4.3 3.5 L0.7 6.4" stroke="#333" stroke-width="1.3" fill="none"/></svg>
<div class="t" style="left:596px;top:224.2px;font-size:8.6px;color:#222;transform-origin:0 50%;-webkit-text-stroke:0.3px #222">September 2025</div>
<div class="t" style="left:541.5px;width:20px;text-align:center;top:240.79999999999998px;font-size:7.6px;color:#6a6a6a;transform-origin:50% 50%;-webkit-text-stroke-width:0">S</div>
<div class="t" style="left:566.8px;width:20px;text-align:center;top:240.79999999999998px;font-size:7.6px;color:#6a6a6a;transform-origin:50% 50%;-webkit-text-stroke-width:0">M</div>
<div class="t" style="left:592.1px;width:20px;text-align:center;top:240.79999999999998px;font-size:7.6px;color:#6a6a6a;transform-origin:50% 50%;-webkit-text-stroke-width:0">T</div>
<div class="t" style="left:617.4px;width:20px;text-align:center;top:240.79999999999998px;font-size:7.6px;color:#6a6a6a;transform-origin:50% 50%;-webkit-text-stroke-width:0">W</div>
<div class="t" style="left:642.7px;width:20px;text-align:center;top:240.79999999999998px;font-size:7.6px;color:#6a6a6a;transform-origin:50% 50%;-webkit-text-stroke-width:0">T</div>
<div class="t" style="left:668.0px;width:20px;text-align:center;top:240.79999999999998px;font-size:7.6px;color:#6a6a6a;transform-origin:50% 50%;-webkit-text-stroke-width:0">F</div>
<div class="t" style="left:693.3px;width:20px;text-align:center;top:240.79999999999998px;font-size:7.6px;color:#6a6a6a;transform-origin:50% 50%;-webkit-text-stroke-width:0">S</div>
<div class="a" style="left:592.4px;top:288.8px;width:19.6px;height:19.6px;border-radius:50%;background:#1672d0"></div>
<div class="t" style="left:566.8px;width:20px;text-align:center;top:254.79999999999998px;font-size:7.9px;color:#3a3a3a;transform-origin:50% 50%;-webkit-text-stroke-width:0.05px">1</div>
<div class="t" style="left:592.1px;width:20px;text-align:center;top:254.79999999999998px;font-size:7.9px;color:#3a3a3a;transform-origin:50% 50%;-webkit-text-stroke-width:0.05px">2</div>
<div class="t" style="left:617.4px;width:20px;text-align:center;top:254.79999999999998px;font-size:7.9px;color:#3a3a3a;transform-origin:50% 50%;-webkit-text-stroke-width:0.05px">3</div>
<div class="t" style="left:642.7px;width:20px;text-align:center;top:254.79999999999998px;font-size:7.9px;color:#3a3a3a;transform-origin:50% 50%;-webkit-text-stroke-width:0.05px">4</div>
<div class="t" style="left:668.0px;width:20px;text-align:center;top:254.79999999999998px;font-size:7.9px;color:#3a3a3a;transform-origin:50% 50%;-webkit-text-stroke-width:0.05px">5</div>
<div class="t" style="left:693.3px;width:20px;text-align:center;top:254.79999999999998px;font-size:7.9px;color:#3a3a3a;transform-origin:50% 50%;-webkit-text-stroke-width:0.05px">6</div>
<div class="t" style="left:541.5px;width:20px;text-align:center;top:274.7px;font-size:7.9px;color:#3a3a3a;transform-origin:50% 50%;-webkit-text-stroke-width:0.05px">7</div>
<div class="t" style="left:566.8px;width:20px;text-align:center;top:274.7px;font-size:7.9px;color:#3a3a3a;transform-origin:50% 50%;-webkit-text-stroke-width:0.05px">8</div>
<div class="t" style="left:592.1px;width:20px;text-align:center;top:274.7px;font-size:7.9px;color:#3a3a3a;transform-origin:50% 50%;-webkit-text-stroke-width:0.05px">9</div>
<div class="t" style="left:617.4px;width:20px;text-align:center;top:274.7px;font-size:7.9px;color:#3a3a3a;transform-origin:50% 50%;-webkit-text-stroke-width:0.05px">10</div>
<div class="t" style="left:642.7px;width:20px;text-align:center;top:274.7px;font-size:7.9px;color:#3a3a3a;transform-origin:50% 50%;-webkit-text-stroke-width:0.05px">11</div>
<div class="t" style="left:668.0px;width:20px;text-align:center;top:274.7px;font-size:7.9px;color:#3a3a3a;transform-origin:50% 50%;-webkit-text-stroke-width:0.05px">12</div>
<div class="t" style="left:693.3px;width:20px;text-align:center;top:274.7px;font-size:7.9px;color:#3a3a3a;transform-origin:50% 50%;-webkit-text-stroke-width:0.05px">13</div>
<div class="t" style="left:541.5px;width:20px;text-align:center;top:294.40000000000003px;font-size:7.9px;color:#3a3a3a;transform-origin:50% 50%;-webkit-text-stroke-width:0.05px">14</div>
<div class="t" style="left:566.8px;width:20px;text-align:center;top:294.40000000000003px;font-size:7.9px;color:#3a3a3a;transform-origin:50% 50%;-webkit-text-stroke-width:0.05px">15</div>
<div class="t" style="left:592.1px;width:20px;text-align:center;top:294.40000000000003px;font-size:7.9px;color:#fff;transform-origin:50% 50%;-webkit-text-stroke-width:0.05px">16</div>
<div class="t" style="left:617.4px;width:20px;text-align:center;top:294.40000000000003px;font-size:7.9px;color:#3a3a3a;transform-origin:50% 50%;-webkit-text-stroke-width:0.05px">17</div>
<div class="t" style="left:642.7px;width:20px;text-align:center;top:294.40000000000003px;font-size:7.9px;color:#3a3a3a;transform-origin:50% 50%;-webkit-text-stroke-width:0.05px">18</div>
<div class="t" style="left:668.0px;width:20px;text-align:center;top:294.40000000000003px;font-size:7.9px;color:#3a3a3a;transform-origin:50% 50%;-webkit-text-stroke-width:0.05px">19</div>
<div class="t" style="left:693.3px;width:20px;text-align:center;top:294.40000000000003px;font-size:7.9px;color:#3a3a3a;transform-origin:50% 50%;-webkit-text-stroke-width:0.05px">20</div>
<div class="t" style="left:541.5px;width:20px;text-align:center;top:314.1px;font-size:7.9px;color:#3a3a3a;transform-origin:50% 50%;-webkit-text-stroke-width:0.05px">21</div>
<div class="t" style="left:566.8px;width:20px;text-align:center;top:314.1px;font-size:7.9px;color:#3a3a3a;transform-origin:50% 50%;-webkit-text-stroke-width:0.05px">22</div>
<div class="t" style="left:592.1px;width:20px;text-align:center;top:314.1px;font-size:7.9px;color:#3a3a3a;transform-origin:50% 50%;-webkit-text-stroke-width:0.05px">23</div>
<div class="t" style="left:617.4px;width:20px;text-align:center;top:314.1px;font-size:7.9px;color:#3a3a3a;transform-origin:50% 50%;-webkit-text-stroke-width:0.05px">24</div>
<div class="t" style="left:642.7px;width:20px;text-align:center;top:314.1px;font-size:7.9px;color:#3a3a3a;transform-origin:50% 50%;-webkit-text-stroke-width:0.05px">25</div>
<div class="t" style="left:668.0px;width:20px;text-align:center;top:314.1px;font-size:7.9px;color:#3a3a3a;transform-origin:50% 50%;-webkit-text-stroke-width:0.05px">26</div>
<div class="t" style="left:693.3px;width:20px;text-align:center;top:314.1px;font-size:7.9px;color:#3a3a3a;transform-origin:50% 50%;-webkit-text-stroke-width:0.05px">27</div>
<div class="t" style="left:541.5px;width:20px;text-align:center;top:333.8px;font-size:7.9px;color:#3a3a3a;transform-origin:50% 50%;-webkit-text-stroke-width:0.05px">28</div>
<div class="t" style="left:566.8px;width:20px;text-align:center;top:333.8px;font-size:7.9px;color:#3a3a3a;transform-origin:50% 50%;-webkit-text-stroke-width:0.05px">29</div>
<div class="t" style="left:592.1px;width:20px;text-align:center;top:333.8px;font-size:7.9px;color:#3a3a3a;transform-origin:50% 50%;-webkit-text-stroke-width:0.05px">30</div>
<div class="a" style="left:0;top:375px;width:725px;height:30px;background:#c7d6e7;border-top:0.8px solid #d3e0ee"></div>
<svg style="left:11.1px;top:384px" width="14.6" height="12.5" viewBox="0 0 14.6 12.5"><rect x="0.5" y="0.5" width="13.6" height="11.5" rx="0.8" fill="#3d5b86"/><rect x="1.4" y="1.4" width="5.6" height="9.7" fill="#f4f8fc"/><rect x="7.8" y="1.4" width="5.4" height="5.8" fill="#86d2f2"/><rect x="7.8" y="7.2" width="5.4" height="3.9" fill="#2f8fe0"/></svg>
<svg style="left:274.8px;top:384.1px" width="13.6" height="13" viewBox="0 0 13.6 13"><defs><linearGradient id="wl" x1="0" y1="0" x2="1" y2="1"><stop offset="0" stop-color="#27a8e6"/><stop offset="1" stop-color="#0c7fd6"/></linearGradient></defs><rect x="0" y="0" width="13.6" height="13" fill="url(#wl)"/><rect x="6.4" y="0" width="0.8" height="13" fill="#7fd6fa"/><rect x="0" y="6.1" width="13.6" height="0.8" fill="#7fd6fa"/></svg>
<svg style="left:296px;top:380px" width="104" height="21" viewBox="0 0 104 21"><path d="M6.5 1.2 H95 Q99 1.2 101 5 L102.2 8.2 Q102.8 10.5 102.2 12.8 L101 16 Q99 19.7 95 19.7 H6.5 Q5 19.7 4.2 18.6 L1.9 12.2 Q1.4 10.5 1.9 8.8 L4.2 2.3 Q5 1.2 6.5 1.2 Z" fill="#edf2f7"/></svg>
<svg style="left:304.3px;top:387px" width="8" height="8" viewBox="0 0 8 8"><circle cx="3.5" cy="3.5" r="2.9" stroke="#2a2a2a" stroke-width="1.15" fill="none"/><path d="M5.5 5.5 L7.6 7.6" stroke="#2a2a2a" stroke-width="1.2"/></svg>
<div class="t" style="left:319.8px;top:386.6px;font-size:8.3px;color:#333;transform:scaleX(0.9);transform-origin:0 50%;">Search</div>
<svg style="left:383.5px;top:384.3px" width="11.8" height="11.9" viewBox="0 0 11.8 11.9"><defs><linearGradient id="uc" x1="0" y1="0" x2="1" y2="1"><stop offset="0" stop-color="#f8b21c"/><stop offset="1" stop-color="#ec7a12"/></linearGradient></defs><circle cx="5.9" cy="5.95" r="5.9" fill="url(#uc)"/><circle cx="7.6" cy="7.9" r="2.7" fill="#fbeee6"/><circle cx="8.6" cy="6.7" r="1.5" fill="#ef8a14"/></svg>
<div class="a" style="left:403.6px;top:379.2px;width:23px;height:23.6px;border-radius:3px;background:#dfe7ef"></div>
<svg style="left:408px;top:384px" width="15" height="15" viewBox="0 0 15 15"><path d="M0 0.8 Q0 0 0.8 0 H5 Q5.6 0 6 0.6 L6.6 1.4 H14.2 Q15 1.4 15 2.2 V14 H0 Z" fill="#e2a733"/><path d="M0 2.2 H14.2 Q15 2.2 15 3 V14 H0 Z" fill="#fcd450"/><rect x="0" y="2.2" width="15" height="1" fill="#ffe488"/><path d="M2.6 12.9 V10.6 Q2.6 9 4.2 9 H10.8 Q12.4 9 12.4 10.6 V12.9 Z" fill="#1f6fc4"/><rect x="0.8" y="12.9" width="13.4" height="1.6" fill="#f4f8fc"/></svg>
<div class="a" style="left:411px;top:399.5px;width:9.1px;height:1.9px;border-radius:1px;background:#1f6fc4"></div>
<svg style="left:435.3px;top:384px" width="14.7" height="13" viewBox="0 0 14.7 13"><circle cx="7.35" cy="6.5" r="5.4" fill="#6f7984"/><circle cx="7.35" cy="6.5" r="5.9" stroke="#6f7984" stroke-width="2.2" fill="none" stroke-dasharray="3.1 3.08" transform="rotate(-15 7.35 6.5)"/><circle cx="7.35" cy="6.5" r="4.1" fill="#e9eff5"/><circle cx="7.35" cy="6.5" r="3.0" fill="#1d5cae"/></svg>
<svg style="left:600.3px;top:387.8px" width="7.2" height="4.2" viewBox="0 0 7.2 4.2"><path d="M0.5 3.8 L3.6 0.8 L6.7 3.8" stroke="#2a2a2a" stroke-width="1.15" fill="none"/></svg>
<svg style="left:619.6px;top:385px" width="9.1" height="9.5" viewBox="0 0 9.1 9.5"><circle cx="4.2" cy="4.6" r="3.8" stroke="#333" stroke-width="0.9" fill="none"/><ellipse cx="4.2" cy="4.6" rx="1.6" ry="3.8" stroke="#333" stroke-width="0.8" fill="none"/><path d="M0.4 4.6 H8 M1 2.6 H7.4 M1 6.6 H7.4" stroke="#333" stroke-width="0.7"/><circle cx="7" cy="7.6" r="1.9" fill="#c7d6e7" stroke="#333" stroke-width="0.8"/></svg>
<svg style="left:632px;top:385.2px" width="9" height="9" viewBox="0 0 9 9"><path d="M0.5 3 H2.3 L5 0.7 V8.3 L2.3 6 H0.5 Z" stroke="#333" stroke-width="0.9" fill="none"/><path d="M6.4 2.8 Q7.6 4.5 6.4 6.2 M7.6 1.6 Q9.4 4.5 7.6 7.4" stroke="#333" stroke-width="0.7" fill="none"/></svg>
<svg style="left:646.1px;top:388px" width="10" height="5.6" viewBox="0 0 10 5.6"><rect x="0.5" y="0.5" width="8.2" height="4.6" rx="0.8" stroke="#222" stroke-width="1" fill="none"/><rect x="1.5" y="1.5" width="6.2" height="2.6" fill="#111"/><rect x="8.9" y="1.8" width="1.1" height="2" fill="#222"/></svg>
<div class="a" style="left:661.3px;top:378.4px;width:58.3px;height:22.7px;border-radius:3px;background:#dae4ef"></div>
<div class="t" style="right:24.799999999999955px;top:381.3px;font-size:7.2px;color:#3a3a3a;transform:scaleX(0.94);transform-origin:100% 50%;-webkit-text-stroke-width:0.08px">4:03 PM</div>
<div class="t" style="right:24.600000000000023px;top:390.6px;font-size:7.2px;color:#3a3a3a;transform:scaleX(0.95);transform-origin:100% 50%;-webkit-text-stroke-width:0.08px">16-09-2025</div>
<svg style="left:706.6px;top:385.2px" width="8" height="9.8" viewBox="0 0 8 9.8"><path d="M0.6 7.6 Q1.6 6.6 1.6 4.4 Q1.6 0.6 4 0.6 Q6.4 0.6 6.4 4.4 Q6.4 6.6 7.4 7.6 Z" stroke="#222" stroke-width="1" fill="none" stroke-linejoin="round"/><path d="M2.9 8.5 Q4 9.8 5.1 8.5" stroke="#222" stroke-width="0.9" fill="none"/></svg>
<div class="a" style="left:0;top:405px;width:725px;height:30px;background:#000"></div>
<div class="a" style="left:187px;top:415px;width:9.7px;height:9.7px;border-radius:1.5px;background:#fff"></div>
<svg style="left:355.9px;top:413.5px" width="13" height="13" viewBox="0 0 13 13"><circle cx="6.5" cy="6.5" r="5.8" stroke="#fff" stroke-width="1.2" fill="none"/><circle cx="6.5" cy="6.5" r="3.4" fill="#fff"/></svg>
<svg style="left:528px;top:414.7px" width="9" height="10.3" viewBox="0 0 9 10.3"><path d="M9 0 V10.3 L0 5.15 Z" fill="#fff"/></svg>
</body></html>
